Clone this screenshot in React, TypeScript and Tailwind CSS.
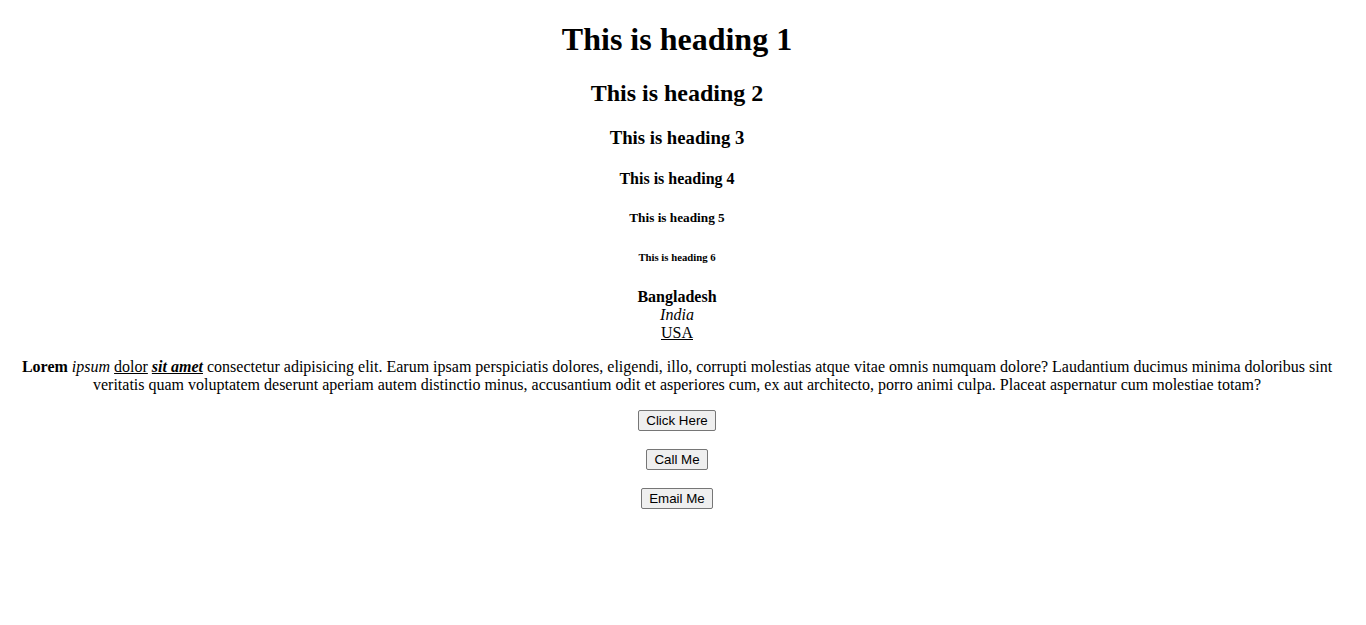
import React from "react";

const buttons = ["Click Here", "Call Me", "Email Me"];

const App: React.FC = () => {
  return (
    <div className="min-h-screen bg-white pl-2 pr-5 pt-[21.44px] text-center font-['Liberation_Serif','Times_New_Roman',serif] text-[16px] leading-[normal] text-black">
      {/* Headings */}
      <h1 className="text-[32px] font-bold leading-[normal]">This is heading 1</h1>
      <h2 className="mt-[21.44px] text-[24px] font-bold leading-[normal]">This is heading 2</h2>
      <h3 className="mt-[19.92px] text-[18.72px] font-bold leading-[normal]">This is heading 3</h3>
      <h4 className="mt-[21.28px] text-[16px] font-bold leading-[normal]">This is heading 4</h4>
      <h5 className="mt-[22.18px] text-[13.28px] font-bold leading-[normal]">This is heading 5</h5>
      <h6 className="mt-[24.98px] text-[10.72px] font-bold leading-[normal]">This is heading 6</h6>

      {/* Countries */}
      <div className="mt-[24.98px] flex flex-col items-center">
        <b>Bangladesh</b>
        <i>India</i>
        <u>USA</u>
      </div>

      {/* Text */}
      <p className="mt-4">
        <b>Lorem</b> <i>ipsum</i> <u>dolor</u>{" "}
        <b>
          <i>
            <u>sit amet</u>
          </i>
        </b>{" "}
        consectetur adipisicing elit. Earum ipsam perspiciatis dolores, eligendi, illo, corrupti molestias atque vitae
        omnis numquam dolore? Laudantium ducimus minima doloribus sint veritatis quam voluptatem deserunt aperiam autem
        distinctio minus, accusantium odit et asperiores cum, ex aut architecto, porro animi culpa. Placeat aspernatur
        cum molestiae totam?
      </p>

      {/* Buttons */}
      <div className="mt-4 flex flex-col items-center gap-[18px]">
        {buttons.map((label) => (
          <button
            key={label}
            className="rounded-[2px] border border-[#767676] bg-[#efefef] px-[7px] py-[2px] font-['Liberation_Sans',Arial,sans-serif] text-[13.33px] leading-[normal] text-black"
          >
            {label}
          </button>
        ))}
      </div>
    </div>
  );
};

export default App;
